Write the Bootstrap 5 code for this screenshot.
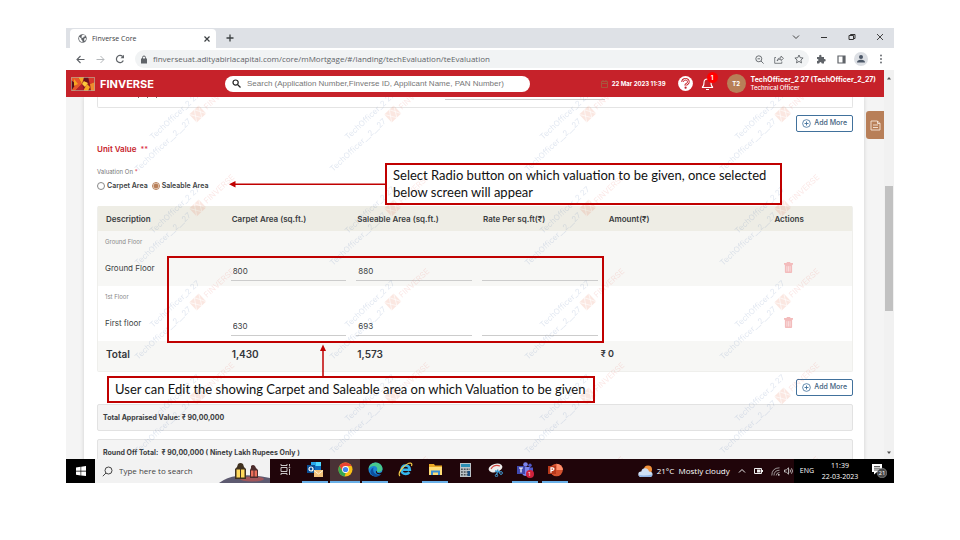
<!DOCTYPE html>
<html lang="en">
<head>
<meta charset="utf-8">
<meta name="viewport" content="width=device-width, initial-scale=1">
<title>Finverse Core</title>
<link href="https://cdn.jsdelivr.net/npm/bootstrap@5.3.0/dist/css/bootstrap.min.css" rel="stylesheet">
<style>
  :root { --brand: #c6222a; --tan: #b87f58; --ink: #3c3f43; --note: #c00000; --blue: #41719c; }
  body { font-family: Inter, "Liberation Sans", sans-serif; font-size: 7px; line-height: 10px; color: var(--ink); background: #fff; }
  svg { display: block; flex: none; }
  button, input { font-family: inherit; color: inherit; }
  .slide { height: 100vh; padding: 28px 66px 57px; }
  .fill-rest { flex: 1 1 auto; min-height: 0; min-width: 0; }
  .ui-font { font-family: "Open Sans", "Noto Sans", sans-serif; }
  .plain-btn { background: none; border: 0; padding: 0; display: flex; align-items: center; justify-content: center; }

  /* browser window */
  .tab-strip { background: #dee1e6; height: 20px; color: #3c4043; }
  .tab-item { background: #fff; width: 146px; margin: 1px 0 0 4px; padding: 0 2px 0 8px; border-radius: 4px 4px 0 0; gap: 5px; }
  .win-btn { width: 28px; height: 17px; }
  .tool-strip { height: 22px; padding: 0 3px 0 4px; color: #5f6368; }
  .tool-btn { width: 20px; height: 18px; }
  .omnibox { background: #f1f3f4; border-radius: 9px; height: 18px; margin: 0 2px 0 5px; padding-left: 5px; gap: 5px; }
  .address { font-size: 8px; color: #5f6368; background: none; border: 0; padding: 0; outline: 0; min-width: 0; }

  /* application header */
  .app-bar { background: var(--brand); height: 27px; padding: 0 8px 0 5px; color: #fff; }
  .brand-name { font-size: 11px; font-weight: 700; line-height: 14px; width: 130px; padding-left: 5px; }
  .search-pill { background: #fff; border-radius: 8px; height: 16px; width: 305px; padding: 0 7px; gap: 6px; color: #222; }
  .search-pill input { font: 8px/12px "Liberation Sans", Arial, sans-serif; border: 0; outline: 0; padding: 0; min-width: 0; background: none; }
  .search-pill input::placeholder { color: #777; opacity: 1; }
  .stamp-date { font-size: 6px; font-weight: 700; }
  .avatar { width: 19px; height: 19px; border-radius: 50%; background: var(--tan); margin: 0 5px 0 13px; font-size: 6px; font-weight: 700; }
  .alert-count { position: absolute; left: 6px; top: -5px; width: 11px; height: 11px; border-radius: 50%; background: #f00; font-size: 6px; font-weight: 700; line-height: 11px; text-align: center; }
  .role { font-size: 6px; line-height: 8px; font-weight: 500; }
  .user-name { font-weight: 700; line-height: 9px; }

  /* page */
  .page-view { background: #f4f4f4; padding: 0 20px 0 18px; }
  .sheet { background: #fff; box-shadow: 0 0 4px rgba(0,0,0,.15); padding: 0 11px 0 13px; }
  .prev-panel { border: 1px solid #e4e4e4; border-top: 0; border-radius: 0 0 2px 2px; height: 11px; margin-bottom: 7px; }
  .add-btn { border: 1px solid var(--blue); border-radius: 2px; color: #3f5f80; font-size: 7px; font-weight: 500; line-height: 10px; padding: 2px 5px 3px; gap: 3px; }
  .section-title { color: var(--brand); font-size: 8px; font-weight: 600; line-height: 10px; margin: 12px 0 13px; }
  .section-title .text-danger { font-size: 7px; }
  .legend { font-size: 6px; line-height: 8px; color: #777; margin: 0 0 5px; }
  .choice { font-weight: 600; gap: 2px; }
  .choice input { appearance: none; width: 8px; height: 8px; margin: 0; border: 1px solid #888; border-radius: 50%; background: #fff; }
  .choice input:checked { border-color: var(--tan); background: radial-gradient(circle, var(--tan) 0 2px, #fff 3px); }
  .unit-table { table-layout: fixed; width: 100%; margin: 15px 0 7px; border-collapse: separate; border-spacing: 0; border: 1px solid #efefec; border-top: 0; border-radius: 2px; }
  .unit-table th { background: #eeede5; font-size: 8px; font-weight: 600; height: 25px; padding: 0 8px; color: #3a3c40; white-space: nowrap; }
  .unit-table tbody td { height: 55px; padding: 0 3px 5px 7px; vertical-align: bottom; }
  .unit-table tbody tr:nth-child(odd) td, .unit-table tfoot td { background: #f7f7f5; }
  .unit-table tbody td.floor { padding: 7px 7px 12px; vertical-align: top; }
  .floor-tag { font-size: 6px; line-height: 8px; color: #888; margin-bottom: 17px; }
  .floor-name { font-size: 8px; line-height: 10px; }
  .unit-table tbody td.act { vertical-align: middle; padding: 18px 2px 0 0; }
  .unit-table tfoot td { height: 30px; font-size: 10px; font-weight: 600; padding: 0 8px 5px; color: #33363a; }
  .unit-table tfoot td.amount { padding-left: 0; font-size: 9px; }
  .cell-input { width: 100%; border: 0; border-bottom: 1px solid #ccc; background: none; padding: 0 2px; height: 19px; font-size: 8px; line-height: 12px; outline: 0; display: block; border-radius: 0; }
  .sum-panel { background: #f4f4f4; border: 1px solid #e2e2e2; border-radius: 2px; height: 27px; padding: 0 5px; margin-top: 8px; font-weight: 700; color: #3a3c40; }
  .side-tab { position: absolute; right: 0; top: 14px; width: 18px; height: 28px; background: var(--tan); border-radius: 3px 0 0 3px; }
  .marks { position: absolute; inset: 0; width: 100%; height: 100%; pointer-events: none; }
  .rail { width: 10px; background: #f1f1f1; padding: 6px 0 4px; }
  .thumb { width: 8px; margin: 0 auto; background: #c1c1c1; }

  /* taskbar */
  .taskbar { background: #20050a; height: 24px; color: #fff; font-size: 7px; }
  .start-btn { width: 29px; background: #000; }
  .find-box { background: #f2f2f2; width: 175px; color: #444; padding-left: 7px; gap: 6px; }
  .find-box input { border: 0; background: none; outline: 0; padding: 0; width: 90px; font-size: 8px; }
  .find-box input::placeholder { color: #444; opacity: 1; }
  .app-btn { width: 30px; padding: 0 0 1px; border-bottom: 2px solid transparent; }
  .app-btn.open { border-bottom-color: #69b0e8; background-clip: padding-box; width: 26px; margin: 0 2px; }
  .app-btn.current { background: #4a3236; width: 30px; margin: 0; }
  .count-dot { position: absolute; background: #d0213d; border-radius: 50%; width: 8px; height: 8px; font-size: 6px; line-height: 8px; margin: 8px 0 0 9px; }
  .weather { font-size: 8px; }
  .tray { background: #000; padding: 0 2px 0 6px; gap: 7px; }
  .clock { line-height: 11px; width: 38px; }
  .notice-btn { width: 26px; }

  /* callouts drawn over the window */
  .callout { position: absolute; border: 2px solid var(--note); color: #111; font-family: Lato, Carlito, sans-serif; font-size: 13px; line-height: 17px; margin: 0; padding: 2px 6px; white-space: nowrap; }
  .callout-top { left: 319px; top: 135px; width: 397px; }
  .callout-low { left: 41px; top: 348px; width: 488px; padding: 3px 6px; }
  .focus-box { position: absolute; left: 101px; top: 228px; width: 437px; height: 87px; border: 2px solid var(--note); pointer-events: none; }
  .pointer-left { position: absolute; left: 162px; top: 152px; }
  .pointer-up { position: absolute; left: 253px; top: 316px; }
</style>
<script src="https://cdn.jsdelivr.net/npm/bootstrap@5.3.0/dist/js/bootstrap.bundle.min.js"></script>
</head>
<body>
<svg width="0" height="0" class="position-absolute" aria-hidden="true">
  <defs>
    <g id="mosaic">
      <path fill="#8e1620" d="M0 0h24v14H0z"/>
      <path fill="#e8562a" d="M0 0h7l4 7-7 7H0z"/><path fill="#5d0f18" d="M0 3l5 4-5 7z"/>
      <path fill="#f6a623" d="M7 0h6l-2 7zM12 14l4-7 3 3-2 4z"/><path fill="#b5202c" d="M4 14l7-7 2 7z"/>
      <path fill="#fbc93d" d="M13 4l4 2-3 4-3-3z"/><path fill="#d8362a" d="M17 0h7v5l-5 2z"/>
      <path fill="#f08a2c" d="M19 7l5-2v9h-4z"/><path fill="#6c111c" d="M13 0h4l1 6-5-2z"/><path fill="#f6a623" d="M3 2l4 5-4 2z"/>
    </g>
    <symbol id="bin" viewBox="0 0 10 12"><path fill="#f3bcbc" d="M3 0h4v1h3v2H0V1h3zM1 3h8v8q0 1-1 1H2q-1 0-1-1z"/><path stroke="#fbe9e9" stroke-width=".8" d="M3.200 4.500v6M5 4.500v6M6.800 4.500v6"/></symbol>
    <symbol id="plus-ring" viewBox="0 0 10 10"><g fill="none" stroke="#41719c"><circle cx="5" cy="5" r="4.300" stroke-width=".9"/><path d="M5 2.800v4.400M2.800 5h4.400"/></g></symbol>
  </defs>
</svg>

<main class="slide d-flex flex-column">
<div class="fill-rest position-relative d-flex flex-column">

  <div class="tab-strip ui-font d-flex flex-shrink-0">
    <div class="tab-item d-flex align-items-center">
      <svg width="9" height="9" viewBox="0 0 16 16"><circle cx="8" cy="8" r="7.500" fill="#5f6368"/><path fill="#fff" d="M2 5l4 3v2l2 2v2.500Q2 14 2 8zM7 2l4-.5L13 4l-3 1-1 2-3-1zM11 8l3.500-1q0 4-3 6l-.5-3z"/></svg>
      <span class="flex-fill">Finverse Core</span>
      <button class="plain-btn" aria-label="Close tab"><svg width="14" height="8" viewBox="0 0 14 8"><path stroke="#3c4043" stroke-width="1.200" d="M4.500 1.500l5 5M9.500 1.500l-5 5"/></svg></button>
    </div>
    <button class="plain-btn ms-2" aria-label="New tab"><svg width="12" height="8" viewBox="0 0 12 8"><path stroke="#3c4043" stroke-width="1.300" d="M6 .5v7M2.500 4h7"/></svg></button>
    <div class="ms-auto d-flex">
      <button class="plain-btn win-btn" aria-label="Tab list"><svg width="8" height="8" viewBox="0 0 8 8"><path fill="none" stroke="#444" d="M1 2.500l3 3 3-3"/></svg></button>
      <button class="plain-btn win-btn" aria-label="Minimize"><svg width="8" height="8" viewBox="0 0 8 8"><path stroke="#333" d="M1 4.500h6"/></svg></button>
      <button class="plain-btn win-btn" aria-label="Restore"><svg width="8" height="8" viewBox="0 0 8 8"><path fill="none" stroke="#333" d="M1 2.500h4.500v4H1zM2.500 2.500v-1H7v4H5.500"/></svg></button>
      <button class="plain-btn win-btn" aria-label="Close"><svg width="8" height="8" viewBox="0 0 8 8"><path stroke="#333" stroke-width=".9" d="M1 1l6 6M7 1L1 7"/></svg></button>
    </div>
  </div>

  <div class="tool-strip ui-font d-flex align-items-center flex-shrink-0 bg-white">
    <button class="plain-btn tool-btn" aria-label="Back"><svg width="9" height="9" viewBox="0 0 9 9"><path fill="none" stroke="#5f6368" stroke-width="1.100" d="M8.500 4.500H1M4.500 1L1 4.500 4.500 8"/></svg></button>
    <button class="plain-btn tool-btn" aria-label="Forward"><svg width="9" height="9" viewBox="0 0 9 9"><path fill="none" stroke="#b4b7ba" d="M.5 4.500H8M4.500 1L8 4.500 4.500 8"/></svg></button>
    <button class="plain-btn tool-btn" aria-label="Reload"><svg width="10" height="10" viewBox="0 0 10 10"><path fill="none" stroke="#5f6368" stroke-width="1.200" d="M8.300 6.500A3.600 3.600 0 1 1 7.600 2.500"/><path fill="#5f6368" d="M9 .8v3.500H5.500z"/></svg></button>
    <div class="omnibox d-flex align-items-center flex-fill">
      <svg width="8" height="9" viewBox="0 0 8 9"><path fill="#5f6368" d="M1 3.500h6V8.500H1z"/><path fill="none" stroke="#5f6368" d="M2.500 4V2.500q0-1.500 1.500-1.500t1.500 1.500V4"/></svg>
      <input class="address flex-fill" aria-label="Address" value="finverseuat.adityabirlacapital.com/core/mMortgage/#/landing/techEvaluation/teEvaluation">
      <div class="d-flex">
        <button class="plain-btn tool-btn" aria-label="Zoom"><svg width="9" height="9" viewBox="0 0 9 9"><g fill="none" stroke="#5f6368" stroke-width=".9"><circle cx="3.800" cy="3.800" r="3"/><path d="M6 6l2.600 2.600M2.500 3.800h2.600"/></g></svg></button>
        <button class="plain-btn tool-btn" aria-label="Share"><svg width="10" height="9" viewBox="0 0 10 9"><path fill="none" stroke="#5f6368" stroke-width=".8" d="M2 2.500H.7v5.800h7.100V6.500M3 6q.5-3.300 4-3.300V1l2.500 2.400L7 5.600V4Q4.500 4 3 6z"/></svg></button>
        <button class="plain-btn tool-btn" aria-label="Bookmark"><svg width="10" height="10" viewBox="0 0 10 10"><path fill="none" stroke="#5f6368" stroke-width=".9" d="M5 1l1.200 2.700 2.900.3-2.200 2 .6 2.900L5 7.400 2.500 8.900 3.100 6 .9 4l2.900-.3z"/></svg></button>
      </div>
    </div>
    <button class="plain-btn tool-btn" aria-label="Extensions"><svg width="10" height="10" viewBox="0 0 10 10"><path fill="#5f6368" d="M1 3h2.200Q2.800.8 4.300.8T5.500 3H8v2q1.700-.2 1.700 1.200T8 7.400V9.500H5.800Q5.600 8 4.500 8t-1.300 1.500H1V7q1.500 0 1.500-1T1 5z"/></svg></button>
    <button class="plain-btn tool-btn" aria-label="Side panel"><svg width="9" height="9" viewBox="0 0 9 9"><path fill="none" stroke="#5f6368" stroke-width="1.200" d="M1 1h7v7H1z"/><path fill="#5f6368" d="M5.500 1H8v7H5.500z"/></svg></button>
    <button class="plain-btn tool-btn" aria-label="Profile"><svg width="14" height="14" viewBox="0 0 14 14"><circle cx="7" cy="7" r="7" fill="#dcdfe4"/><g fill="#4b5666"><circle cx="7" cy="5" r="2"/><path d="M3 10.500q0-2.700 4-2.700t4 2.700z"/></g></svg></button>
    <button class="plain-btn tool-btn" aria-label="Menu"><svg width="4" height="10" viewBox="0 0 4 10"><g fill="#5f6368"><circle cx="2" cy="1.500" r=".9"/><circle cx="2" cy="5" r=".9"/><circle cx="2" cy="8.500" r=".9"/></g></svg></button>
  </div>

  <div class="fill-rest d-flex">
    <div class="fill-rest d-flex flex-column">
      <header class="app-bar d-flex align-items-center flex-shrink-0">
        <svg width="24" height="14" viewBox="0 0 24 14"><use href="#mosaic"/><path fill="none" stroke="#b9a391" stroke-width=".8" d="M.4.4h23.200v13.200H.4z"/></svg>
        <span class="brand-name">FINVERSE</span>
        <form class="search-pill d-flex align-items-center">
          <svg width="9" height="9" viewBox="0 0 9 9"><g fill="none" stroke="#222" stroke-width="1.200"><circle cx="3.600" cy="3.600" r="2.600"/><path d="M5.500 5.500l3 3"/></g></svg>
          <input class="flex-fill" aria-label="Search" placeholder="Search (Application Number,Finverse ID, Applicant Name, PAN Number)">
        </form>
        <div class="ms-auto d-flex align-items-center">
          <svg width="7" height="8" viewBox="0 0 7 8" class="me-1"><path fill="none" stroke="#a8563c" d="M.5 1.500h6v6h-6zM.5 3.500h6M2 0v2M5 0v2"/></svg>
          <span class="stamp-date">22 Mar 2023 11:39</span>
          <button class="plain-btn" style="margin-left:12px" aria-label="Help"><svg width="15" height="15" viewBox="0 0 15 15"><circle cx="7.500" cy="7.500" r="7.400" fill="#fff"/><path fill="none" stroke="#c6222a" stroke-width="2.600" d="M4.600 6q0-2.700 2.900-2.700T10.400 6q0 1.300-1.500 2-1.300.6-1.300 1.500"/><path fill="none" stroke="#fff" stroke-width=".9" d="M4.600 6q0-2.700 2.900-2.700T10.400 6q0 1.300-1.500 2-1.300.6-1.300 1.200"/><circle cx="7.600" cy="11.700" r="1.100" fill="#c6222a"/></svg></button>
          <button class="plain-btn position-relative ms-2" aria-label="Notifications"><svg width="13" height="14" viewBox="0 0 13 14"><path fill="none" stroke="#fff" stroke-width="1.100" d="M1 10.500q2-1 2-5Q3 2 6.500 2T10 5.500q0 4 2 5zM5 12.500h3"/></svg><span class="alert-count">1</span></button>
          <span class="avatar d-flex align-items-center justify-content-center">T2</span>
          <div><div class="user-name">TechOfficer_2 27 (TechOfficer_2_27)</div><div class="role">Technical Officer</div></div>
        </div>
      </header>

      <div class="page-view position-relative flex-fill overflow-hidden">
        <div class="sheet">
          <div class="prev-panel"><svg width="512" height="3" viewBox="0 0 512 3"><path stroke="#777" d="M40.500 0v1M49.500 0v1M58.500 0v1"/><path stroke="#ccc" d="M347 2.500h160"/></svg></div>
          <div class="d-flex justify-content-end"><button class="btn add-btn d-flex align-items-center"><svg width="9" height="9"><use href="#plus-ring"/></svg>Add More</button></div>

          <h2 class="section-title">Unit Value &nbsp;<span class="text-danger">**</span></h2>
          <fieldset>
            <legend class="legend">Valuation On <span class="text-danger">*</span></legend>
            <div class="d-flex">
              <label class="choice d-flex align-items-center me-1"><input type="radio" name="basis">Carpet Area</label>
              <label class="choice d-flex align-items-center"><input type="radio" name="basis" checked>Saleable Area</label>
            </div>
          </fieldset>

          <table class="unit-table">
            <thead><tr><th>Description</th><th>Carpet Area (sq.ft.)</th><th>Saleable Area (sq.ft.)</th><th>Rate Per sq.ft(₹)</th><th>Amount(₹)</th><th class="text-center">Actions</th></tr></thead>
            <tbody>
              <tr>
                <td class="floor"><div class="floor-tag">Ground Floor</div><div class="floor-name">Ground Floor</div></td>
                <td><input class="cell-input" aria-label="Carpet area, ground floor" value="800"></td>
                <td><input class="cell-input" aria-label="Saleable area, ground floor" value="880"></td>
                <td><input class="cell-input" aria-label="Rate, ground floor"></td>
                <td></td>
                <td class="act"><button class="plain-btn mx-auto" aria-label="Delete ground floor"><svg width="9" height="11"><use href="#bin"/></svg></button></td>
              </tr>
              <tr>
                <td class="floor"><div class="floor-tag">1st Floor</div><div class="floor-name">First floor</div></td>
                <td><input class="cell-input" aria-label="Carpet area, first floor" value="630"></td>
                <td><input class="cell-input" aria-label="Saleable area, first floor" value="693"></td>
                <td><input class="cell-input" aria-label="Rate, first floor"></td>
                <td></td>
                <td class="act"><button class="plain-btn mx-auto" aria-label="Delete first floor"><svg width="9" height="11"><use href="#bin"/></svg></button></td>
              </tr>
            </tbody>
            <tfoot><tr><td>Total</td><td>1,430</td><td>1,573</td><td></td><td class="amount">₹ 0</td><td></td></tr></tfoot>
          </table>

          <div class="d-flex justify-content-end"><button class="btn add-btn d-flex align-items-center"><svg width="9" height="9"><use href="#plus-ring"/></svg>Add More</button></div>
          <div class="sum-panel d-flex align-items-center mt-2 pt-0">Total Appraised Value: ₹ 90,00,000</div>
          <div class="sum-panel d-flex align-items-center">Round Off Total: &nbsp;₹ 90,00,000 ( Ninety Lakh Rupees Only )</div>
        </div>
        <button class="plain-btn side-tab" aria-label="Documents"><svg width="11" height="11" viewBox="0 0 11 11"><path fill="none" stroke="#f6e6da" stroke-width=".9" d="M1 1h6.500L10 3.500V10H1zM3 5h5M3 7.500h5M7.500 1v2.500H10"/></svg></button>
        <svg class="marks" aria-hidden="true">
          <defs>
            <g id="stamp" font-family="Inter, sans-serif" font-size="8">
              <text transform="translate(21 80) rotate(-43)" fill="#4f72ac">TechOfficer_2 27</text>
              <text transform="translate(6 112) rotate(-43)" fill="#4f72ac">TechOfficer__2__27</text>
              <text transform="translate(75 50) rotate(-43)" fill="#e8736a">FINVERSE</text>
              <g transform="translate(65 54) rotate(-43)">
                <path fill="#e57350" d="M-6-5H7V6H-6z"/>
                <path fill="none" stroke="#fff" stroke-width=".6" d="M-6-5L1 6 7-5M-6 6L1-5l6 11"/>
              </g>
            </g>
            <pattern id="stamps" width="195" height="94" patternUnits="userSpaceOnUse" x="66" y="-37">
              <use href="#stamp"/><use href="#stamp" y="-94"/><use href="#stamp" y="94"/>
            </pattern>
          </defs>
          <rect width="100%" height="100%" fill="url(#stamps)" opacity=".17"/>
        </svg>
      </div>
    </div>
    <div class="rail d-flex flex-column" aria-hidden="true">
      <svg width="10" height="4" viewBox="0 0 10 4"><path fill="#505050" d="M3 3.500h4L5 1z"/></svg>
      <div style="flex:105"></div><div class="thumb" style="flex:125"></div><div style="flex:139"></div>
      <svg width="10" height="4" viewBox="0 0 10 4"><path fill="#505050" d="M3 .5h4L5 3z"/></svg>
    </div>
  </div>

  <footer class="taskbar ui-font d-flex flex-shrink-0">
    <button class="plain-btn start-btn" aria-label="Start"><svg width="10" height="10" viewBox="0 0 10 10"><path fill="#fff" d="M0 1.400l4.600-.6v4H0zM5.200.7L10 0v4.800H5.200zM0 5.400h4.600v4L0 8.800zM5.200 5.400H10V10l-4.800-.6z"/></svg></button>
    <label class="find-box d-flex align-items-center">
      <svg width="11" height="11" viewBox="0 0 11 11"><g fill="none" stroke="#333" stroke-width=".9"><circle cx="6.500" cy="4.500" r="3.500"/><path d="M4 7L.8 10.200"/></g></svg>
      <input aria-label="Type here to search" placeholder="Type here to search">
      <svg class="ms-auto" width="51" height="24" viewBox="0 0 51 24"><path fill="#5d5a70" d="M0 24q8-6 18-7 15-2 33 2v5z"/><ellipse cx="33" cy="20" rx="12" ry="2.500" fill="#a2565b"/><path fill="#40311f" d="M19 5q2.500-2 5 0l1 3 2 2v10H16V10l2-2z"/><path fill="#ffd95c" d="M17.500 10.500h3.500v8h-3.500zM22 10.500h3.500v8H22z"/><path fill="#4c2c2c" d="M32 7q2-2 4 0l1 2 2 2v8h-8v-8l1-2z"/><path fill="#ec6f5b" d="M32 11.500h2.500v6H32zM35.500 11.500H38v6h-2.500z"/></svg>
    </label>
    <button class="plain-btn app-btn" aria-label="Task view"><svg width="11" height="11" viewBox="0 0 11 11"><path fill="none" stroke="#ddd" stroke-width=".9" d="M1 3.500h6v4H1zM1 0v1.500h6V0M1 11V9.500h6V11M9.500 0v2.500M9.500 5v6M8.700 3.700h1.600"/></svg></button>
    <button class="plain-btn app-btn open" aria-label="Outlook"><svg width="16" height="15" viewBox="0 0 16 15"><path fill="#28a8ea" d="M4 0h10v10H4z"/><path fill="#0f6cbd" d="M4 4h10v5H4z"/><path fill="#50d9ff" d="M9 0h5v4H9z"/><path fill="#0b4f94" d="M0 3h8v8H0z"/><circle cx="4" cy="7" r="2" fill="none" stroke="#fff" stroke-width="1.200"/><path fill="#f4c27d" d="M7 8h9v7H7z"/><path fill="none" stroke="#fff2d5" d="M7 8.500l4.500 3.500L16 8.500"/></svg></button>
    <button class="plain-btn app-btn open current" aria-label="Chrome"><svg width="15" height="15" viewBox="0 0 15 15"><circle cx="7.500" cy="7.500" r="7" fill="#fbc116"/><path fill="#ea4335" d="M1.400 4A7 7 0 0 1 13.600 4H7.500L4.500 9z"/><path fill="#34a853" d="M1.400 4l3.200 5.300 3 2-1 3.200A7 7 0 0 1 1.400 4z"/><circle cx="7.500" cy="7.500" r="3.400" fill="#fff"/><circle cx="7.500" cy="7.500" r="2.600" fill="#4285f4"/></svg></button>
    <button class="plain-btn app-btn open" aria-label="Edge"><svg width="15" height="15" viewBox="0 0 15 15"><circle cx="7.500" cy="7.500" r="7" fill="#1b86d6"/><path fill="#48c98e" d="M2 3Q5-.5 9.500.7 14.500 2.500 14.500 7q-.5 3-4.500 3-2 0-1-1.500Q10 4.500 6 4 2.500 3.800.6 7 .8 4.500 2 3z"/><path fill="#0d4f9e" d="M5.500 5.500Q4 11 9 12.500q2.500.5 4.500-1-2.500 4-7 2.900Q2 13 2.500 9 3 6.500 5.500 5.500z"/><path fill="#20050a" d="M9 8.800q-1 2.400 2.500 2.400l3-1.200-1 2Q8.500 13 7.800 10q0-1 1.200-1.200z"/></svg></button>
    <button class="plain-btn app-btn" aria-label="Internet Explorer"><svg width="15" height="15" viewBox="0 0 15 15"><path fill="none" stroke="#35b5ec" stroke-width="2.600" d="M3.500 7.800h8.300Q11.500 3.500 7.700 3.500T3.500 7.900q0 4 4.200 4 2.300 0 3.700-1.800"/><path fill="none" stroke="#f7d04b" stroke-width="1.200" d="M2 14Q-.5 12 4 6.500 9 1 12.500 1q2 .3 1 3"/></svg></button>
    <button class="plain-btn app-btn open" aria-label="File Explorer"><svg width="15" height="13" viewBox="0 0 15 13"><path fill="#e9a825" d="M1 1h5l1 1.500h7V12H1z"/><path fill="#ffdd75" d="M1 4h13v8H1z"/><path fill="#3b8fd6" d="M3 7.500h9V12h-2V9.500H5V12H3z"/></svg></button>
    <button class="plain-btn app-btn" aria-label="Calculator"><svg width="11" height="14" viewBox="0 0 11 14"><path fill="#bcc3c8" d="M0 0h11v14H0z"/><path fill="#2c8fb5" d="M1 1h9v3H1z"/><path stroke="#4c5257" stroke-width="1.500" stroke-dasharray="1.800 1" d="M1 6.200h9M1 9h9M1 11.800h9"/><path fill="#194f83" d="M7.500 8H10v5H7.500z"/></svg></button>
    <button class="plain-btn app-btn" aria-label="Snipping Tool"><svg width="15" height="14" viewBox="0 0 15 14"><ellipse cx="7.500" cy="5" rx="7" ry="4.200" fill="#eee" transform="rotate(-15 7.500 5)"/><path fill="none" stroke="#d54843" stroke-width="1.200" d="M3 6Q6 1 12 3"/><path fill="none" stroke="#3f9bd3" stroke-width="1.300" d="M7 8l5 1M10 6.500L8.500 12"/><circle cx="13" cy="10" r="1.400" fill="none" stroke="#3f9bd3"/><circle cx="8.500" cy="12.500" r="1.200" fill="none" stroke="#3f9bd3"/></svg></button>
    <button class="plain-btn app-btn open position-relative" aria-label="Teams"><svg width="16" height="15" viewBox="0 0 16 15"><circle cx="8.500" cy="2.500" r="2.300" fill="#7b83eb"/><circle cx="13" cy="3.300" r="1.700" fill="#5059c9"/><path fill="#7b83eb" d="M5 5h8v6q-2 3-4 3-4 0-4-4z"/><path fill="#5059c9" d="M12 5.500h4V10q-1 2-4 2z"/><path fill="#4049b0" d="M0 4h8v8H0z"/><path stroke="#fff" stroke-width="1.200" d="M2 6h4M4 6v4.500"/></svg><span class="count-dot">1</span></button>
    <button class="plain-btn app-btn open" aria-label="PowerPoint"><svg width="15" height="14" viewBox="0 0 15 14"><circle cx="8.500" cy="7" r="6.300" fill="#d35230"/><path fill="#ff8f6b" d="M8.500.7A6.300 6.300 0 0 1 14.800 7H8.500z"/><path fill="#b7381b" d="M0 3h8v8H0z"/><path fill="none" stroke="#fff" stroke-width="1.200" d="M3 9.800V4.800h1.600q1.300 0 1.300 1.200T4.600 7.300H3"/></svg></button>

    <div class="ms-auto d-flex align-items-center">
      <svg class="me-1" width="15" height="12" viewBox="0 0 15 12"><circle cx="10" cy="4.500" r="4" fill="#f2913c"/><path fill="#cfe0f5" d="M3.500 12Q.3 12 .3 9.200T3.300 6.500Q4 3.300 7 3.300t4 3.200q3.500 0 3.500 2.800T11.500 12z"/><path fill="#8fb4e6" d="M3.500 12Q1 12 .5 10q6 1 14-.5Q14 12 11.500 12z"/></svg>
      <span class="weather">21°C &nbsp;Mostly cloudy</span>
      <svg class="mx-2" width="8" height="6" viewBox="0 0 8 6"><path fill="none" stroke="#eee" d="M1 4.500l3-3 3 3"/></svg>
      <svg class="me-2" width="9" height="6" viewBox="0 0 9 6"><path fill="none" stroke="#eee" d="M.5.5h7v5h-7zM8.500 2v2"/><path fill="#eee" d="M3 1.500h3.500v3H3z"/></svg>
      <svg class="me-1" width="9" height="9" viewBox="0 0 9 9"><g fill="none" stroke="#bbb" stroke-width=".8"><path d="M.8 8.500Q.8 1 8.500.8M3 8.500Q3 3.500 8.500 3.200M5.200 8.500Q5.200 5.800 8.500 5.500"/></g><circle cx="7.800" cy="7.800" r=".9" fill="#ddd"/></svg>
      <svg width="10" height="8" viewBox="0 0 10 8"><path fill="none" stroke="#ddd" stroke-width=".8" d="M.5 3h1.700L4.500.8v6.400L2.200 5H.5zM6 2.500q1 1.500 0 3M7.500 1.300q2 2.700 0 5.400"/></svg>
    </div>
    <div class="tray d-flex align-items-center">
      <span>ENG</span>
      <div class="clock text-center">11:39<br>22-03-2023</div>
      <button class="plain-btn notice-btn" aria-label="Action center"><svg width="15" height="14" viewBox="0 0 15 14"><path fill="#fff" d="M0 0h10v8H5l-3 2.500V8H0z"/><path stroke="#333" stroke-width=".8" d="M2 2.500h6M2 4.200h6M2 6h4"/><circle cx="10" cy="9" r="4.800" fill="#4a4a4a" stroke="#aaa" stroke-width=".5"/><text x="10" y="11.200" font-size="6" fill="#fff" text-anchor="middle">21</text></svg></button>
    </div>
  </footer>

  <div class="focus-box"></div>
  <svg class="pointer-left" width="158" height="8" viewBox="0 0 158 8"><path stroke="#c00000" stroke-width="1.500" d="M6 4.200h152"/><path fill="#c00000" d="M1 4.200L7.500 1v6.400z"/></svg>
  <svg class="pointer-up" width="8" height="33" viewBox="0 0 8 33"><path stroke="#c00000" stroke-width="1.500" d="M4 6v27"/><path fill="#c00000" d="M4 .5L1 7h6z"/></svg>
  <p class="callout callout-top">Select Radio button on which valuation to be given, once selected<br>below screen will appear</p>
  <p class="callout callout-low">User can Edit the showing Carpet and Saleable area on which Valuation to be given</p>
</div>
</main>
</body>
</html>
